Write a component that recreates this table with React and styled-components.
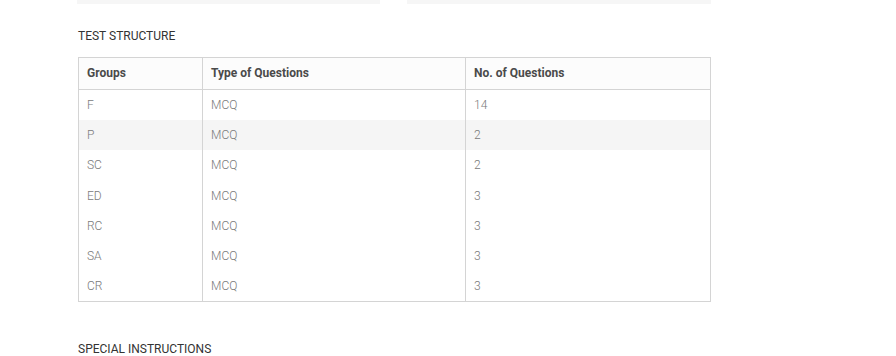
import React from "react";
import styled, { createGlobalStyle } from "styled-components";

const Global = createGlobalStyle`
  html, body { margin: 0; padding: 0; background: #fff; }
  body { font-family: Roboto, "Noto Sans", Arial, sans-serif; }
`;

const Page = styled.div`
  width: 633px;
  margin-left: 78px;
  display: flex;
  flex-direction: column;
`;

const FieldRow = styled.div`
  display: flex;
  gap: 27px;
  margin-left: -1px;
`;

const FieldStub = styled.div`
  flex: ${(p) => p.$w}px 0 0;
  height: 4px;
  background: #f6f6f6;
`;

const SectionTitle = styled.h3`
  margin: ${(p) => p.$top}px 0 0;
  font-size: 12px;
  line-height: 14px;
  font-weight: 400;
  color: #333;
  text-transform: uppercase;
  letter-spacing: 0;
`;

const Table = styled.table`
  margin-top: 14px;
  width: 632px;
  border-collapse: collapse;
  border: 1px solid #d4d4d4;
  table-layout: fixed;
  font-size: 12px;
`;

const HeadCell = styled.th`
  text-align: left;
  font-weight: 700;
  color: #4a4a4a;
  padding: 8px 8px;
  line-height: 15px;
  border-right: 1px solid #d4d4d4;
  border-bottom: 1px solid #d4d4d4;
  background: #fcfcfc;
`;

const Row = styled.tr`
  background: ${(p) => (p.$striped ? "#f5f5f5" : "#fff")};
`;

const Cell = styled.td`
  padding: 8px 8px;
  line-height: 14.2px;
  color: #7a7a7a;
  font-weight: 300;
  border-right: 1px solid #d4d4d4;
`;

const rows = [
  ["F", "MCQ", "14"],
  ["P", "MCQ", "2"],
  ["SC", "MCQ", "2"],
  ["ED", "MCQ", "3"],
  ["RC", "MCQ", "3"],
  ["SA", "MCQ", "3"],
  ["CR", "MCQ", "3"],
];

export default function App() {
  return (
    <>
      <Global />
      <Page>
        <FieldRow>
          <FieldStub $w={303} />
          <FieldStub $w={304} />
        </FieldRow>
        <SectionTitle $top={25}>Test Structure</SectionTitle>
        <Table>
          <colgroup>
            <col style={{ width: 124 }} />
            <col style={{ width: 263 }} />
            <col style={{ width: 245 }} />
          </colgroup>
          <thead>
            <tr>
              <HeadCell>Groups</HeadCell>
              <HeadCell>Type of Questions</HeadCell>
              <HeadCell>No. of Questions</HeadCell>
            </tr>
          </thead>
          <tbody>
            {rows.map((r, i) => (
              <Row key={r[0]} $striped={i === 1}>
                {r.map((c, j) => (
                  <Cell key={j}>{c}</Cell>
                ))}
              </Row>
            ))}
          </tbody>
        </Table>
        <SectionTitle $top={40}>Special Instructions</SectionTitle>
      </Page>
    </>
  );
}
